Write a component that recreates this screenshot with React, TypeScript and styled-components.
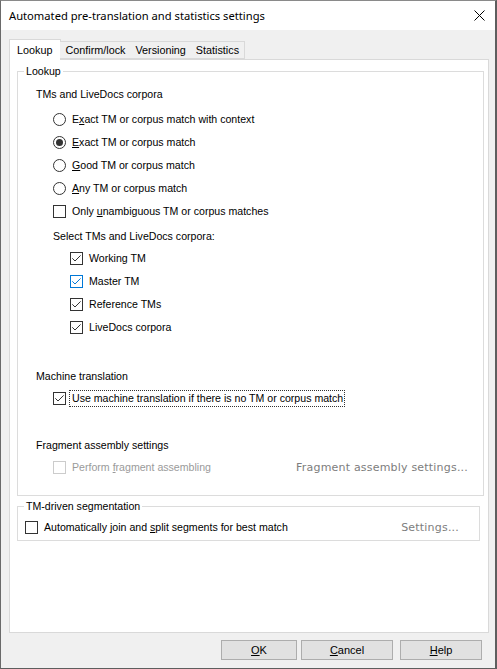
import React from 'react';
import styled, { createGlobalStyle } from 'styled-components';

const GlobalStyle = createGlobalStyle`
  html, body {
    margin: 0;
    padding: 0;
    background: #f0f0f0;
  }
  * {
    box-sizing: border-box;
  }
`

const Window = styled.div`
  width: 497px;
  height: 669px;
  display: flex;
  flex-direction: column;
  background: #f0f0f0;
  border-top: 1px solid #8a8a8a;
  border-left: 1px solid #6a6a6a;
  border-right: 2px solid #5e5e5e;
  border-bottom: 1px solid #5e5e5e;
  font-family: "Liberation Sans", Arial, sans-serif;
  font-size: 10.6px;
  color: #000;
`

const TitleBar = styled.div`
  height: 29px;
  flex: none;
  display: flex;
  align-items: center;
  justify-content: space-between;
  background: #fff;
  padding: 0 9px 0 8px;
`

const Title = styled.span`
  font-family: "Noto Sans", "Liberation Sans", sans-serif;
  font-size: 11.2px;
  padding-bottom: 1px;
`

const CloseButton = styled.div`
  width: 12px;
  height: 12px;
  display: flex;
  align-items: center;
  justify-content: center;
  margin-right: 1px;
`

const Body = styled.div`
  flex: 1;
  display: flex;
  flex-direction: column;
  padding: 9px 6px 0 8px;
`

const TabStrip = styled.div`
  height: 20px;
  display: flex;
  align-items: flex-end;
  position: relative;
  z-index: 1;
  font-size: 10.8px;
`

const Tab = styled.div<{ $active?: boolean }>`
  height: ${p => (p.$active ? '21px' : '18px')};
  margin-bottom: ${p => (p.$active ? '-1px' : '0')};
  padding: ${p => (p.$active ? '0 8px 0 7px' : '0 5px 0 5px')};
  display: flex;
  align-items: center;
  background: ${p => (p.$active ? '#fff' : '#f0f0f0')};
  border: 1px solid #d9d9d9;
  border-bottom: ${p => (p.$active ? 'none' : '1px solid #d9d9d9')};
  margin-left: -1px;
  &:first-child {
    margin-left: 0;
  }
  & + & {
    border-left: ${p => (p.$active ? '1px solid #d9d9d9' : 'none')};
  }
`

const Panel = styled.div`
  height: 574px;
  background: #fff;
  border: 1px solid #d9d9d9;
  padding: 5px 4px 0 7px;
  display: flex;
  flex-direction: column;
`

const GroupBox = styled.fieldset<{ $trim?: number; $gap?: number }>`
  margin: ${p => `${p.$gap ?? 0}px ${p.$trim ?? 0}px 0 0`};
  padding: 0 0 ${p => (p.$trim ? 1 : 16)}px 6px;
  border: 1px solid #dcdcdc;
  min-width: 0;
`

const Legend = styled.legend`
  padding: 0 2px;
  line-height: 13px;
  height: 13px;
`

const Heading = styled.div<{ $indent: number; $top?: number }>`
  height: 22px;
  display: flex;
  align-items: center;
  padding-left: ${p => p.$indent}px;
  margin-top: ${p => p.$top ?? 0}px;
`

const OptionList = styled.div<{ $top?: number }>`
  display: flex;
  flex-direction: column;
  margin-top: ${p => p.$top ?? 0}px;
`

const OptionRow = styled.div<{ $indent: number; $height?: number }>`
  height: ${p => p.$height ?? 23}px;
  display: flex;
  align-items: center;
  padding-left: ${p => p.$indent}px;
`

const SplitRow = styled(OptionRow)<{ $end: number; $top?: number }>`
  justify-content: space-between;
  padding-right: ${p => p.$end}px;
  margin-top: ${p => p.$top ?? 0}px;
`

const Radio = styled.span<{ $checked?: boolean }>`
  width: 13px;
  height: 13px;
  flex: none;
  border: 1px solid #333;
  border-radius: 50%;
  display: flex;
  align-items: center;
  justify-content: center;
  &::after {
    content: '';
    width: 7px;
    height: 7px;
    border-radius: 50%;
    background: ${p => (p.$checked ? '#333' : 'transparent')};
  }
`

const Box = styled.span<{ $hot?: boolean; $disabled?: boolean }>`
  width: 13px;
  height: 13px;
  flex: none;
  border: 1px solid ${p => (p.$hot ? '#0078d7' : p.$disabled ? '#cccccc' : '#333')};
  color: ${p => (p.$hot ? '#0078d7' : '#333')};
  display: flex;
  background: #fff;
`

const OptionText = styled.span<{ $disabled?: boolean; $focus?: boolean }>`
  margin-left: ${p => (p.$focus ? '3px' : '6px')};
  padding: ${p => (p.$focus ? '0 1px 0 2px' : '0')};
  line-height: 15px;
  color: ${p => (p.$disabled ? '#9a9a9a' : '#000')};
  border: ${p => (p.$focus ? '1px dotted #333' : 'none')};
  white-space: nowrap;
`

const LinkButton = styled.span`
  font-family: "DejaVu Sans", Verdana, sans-serif;
  font-size: 11px;
  color: #7d7d7d;
  letter-spacing: 0.2px;
`

const Footer = styled.div`
  display: flex;
  justify-content: flex-end;
  padding: 7px 7px 0 0;
`

const DialogButton = styled.button<{ $w: number; $gap?: number }>`
  width: ${p => p.$w}px;
  height: 20px;
  margin-left: ${p => p.$gap ?? 0}px;
  background: #e1e1e1;
  border: 1px solid #adadad;
  font-family: "Liberation Sans", Arial, sans-serif;
  font-size: 11px;
  color: #000;
  padding: 0;
`

const CheckBox: React.FC<{ checked?: boolean; hot?: boolean; disabled?: boolean }> = ({ checked, hot, disabled }) => (
  <Box $hot={hot} $disabled={disabled}>
    {checked && (
      <svg width="11" height="11" viewBox="0 0 11 11">
        <path d="M1.3 5.3 L4 8 L9.6 2.4" fill="none" stroke="currentColor" strokeWidth="1" />
      </svg>
    )}
  </Box>
)

const App: React.FC = () => {
  return (
    <>
      <GlobalStyle />
      <Window>
        <TitleBar>
          <Title>Automated pre-translation and statistics settings</Title>
          <CloseButton>
            <svg width="11" height="11" viewBox="0 0 11 11">
              <path d="M0.5 0.5 L10.5 10.5 M10.5 0.5 L0.5 10.5" stroke="#000" strokeWidth="1" />
            </svg>
          </CloseButton>
        </TitleBar>
        <Body>
          <TabStrip>
            <Tab $active>Lookup</Tab>
            <Tab>Confirm/lock</Tab>
            <Tab>Versioning</Tab>
            <Tab>Statistics</Tab>
          </TabStrip>
          <Panel>
            <GroupBox>
              <Legend>Lookup</Legend>
              <Heading $indent={12} $top={5}>TMs and LiveDocs corpora</Heading>
              <OptionList $top={3}>
                <OptionRow $indent={29}>
                  <Radio />
                  <OptionText>E<u>x</u>act TM or corpus match with context</OptionText>
                </OptionRow>
                <OptionRow $indent={29}>
                  <Radio $checked />
                  <OptionText><u>E</u>xact TM or corpus match</OptionText>
                </OptionRow>
                <OptionRow $indent={29}>
                  <Radio />
                  <OptionText><u>G</u>ood TM or corpus match</OptionText>
                </OptionRow>
                <OptionRow $indent={29}>
                  <Radio />
                  <OptionText><u>A</u>ny TM or corpus match</OptionText>
                </OptionRow>
                <OptionRow $indent={29}>
                  <CheckBox />
                  <OptionText>Only <u>u</u>nambiguous TM or corpus matches</OptionText>
                </OptionRow>
              </OptionList>
              <Heading $indent={29} $top={2}>Select TMs and LiveDocs corpora:</Heading>
              <OptionList>
                <OptionRow $indent={46}>
                  <CheckBox checked />
                  <OptionText>Working TM</OptionText>
                </OptionRow>
                <OptionRow $indent={46}>
                  <CheckBox checked hot />
                  <OptionText>Master TM</OptionText>
                </OptionRow>
                <OptionRow $indent={46}>
                  <CheckBox checked />
                  <OptionText>Reference TMs</OptionText>
                </OptionRow>
                <OptionRow $indent={46}>
                  <CheckBox checked />
                  <OptionText>LiveDocs corpora</OptionText>
                </OptionRow>
              </OptionList>
              <Heading $indent={12} $top={26}>Machine translation</Heading>
              <OptionRow $indent={29}>
                <CheckBox checked />
                <OptionText $focus>Use machine translation if there is no TM or corpus match</OptionText>
              </OptionRow>
              <Heading $indent={12} $top={24}>Fragment assembly settings</Heading>
              <SplitRow $indent={29} $end={15}>
                <OptionRow $indent={0}>
                  <CheckBox disabled />
                  <OptionText $disabled>Perform <u>f</u>ragment assembling</OptionText>
                </OptionRow>
                <LinkButton>Fragment assembly settings...</LinkButton>
              </SplitRow>
            </GroupBox>
            <GroupBox $trim={4} $gap={4}>
              <Legend>TM-driven segmentation</Legend>
              <SplitRow $indent={1} $height={24} $end={20} $top={2}>
                <OptionRow $indent={0}>
                  <CheckBox />
                  <OptionText>Automatically join and <u>s</u>plit segments for best match</OptionText>
                </OptionRow>
                <LinkButton>Settings...</LinkButton>
              </SplitRow>
            </GroupBox>
          </Panel>
          <Footer>
            <DialogButton $w={76}><u>O</u>K</DialogButton>
            <DialogButton $w={92} $gap={4}><u>C</u>ancel</DialogButton>
            <DialogButton $w={82} $gap={7}><u>H</u>elp</DialogButton>
          </Footer>
        </Body>
      </Window>
    </>
  )
}

export default App
